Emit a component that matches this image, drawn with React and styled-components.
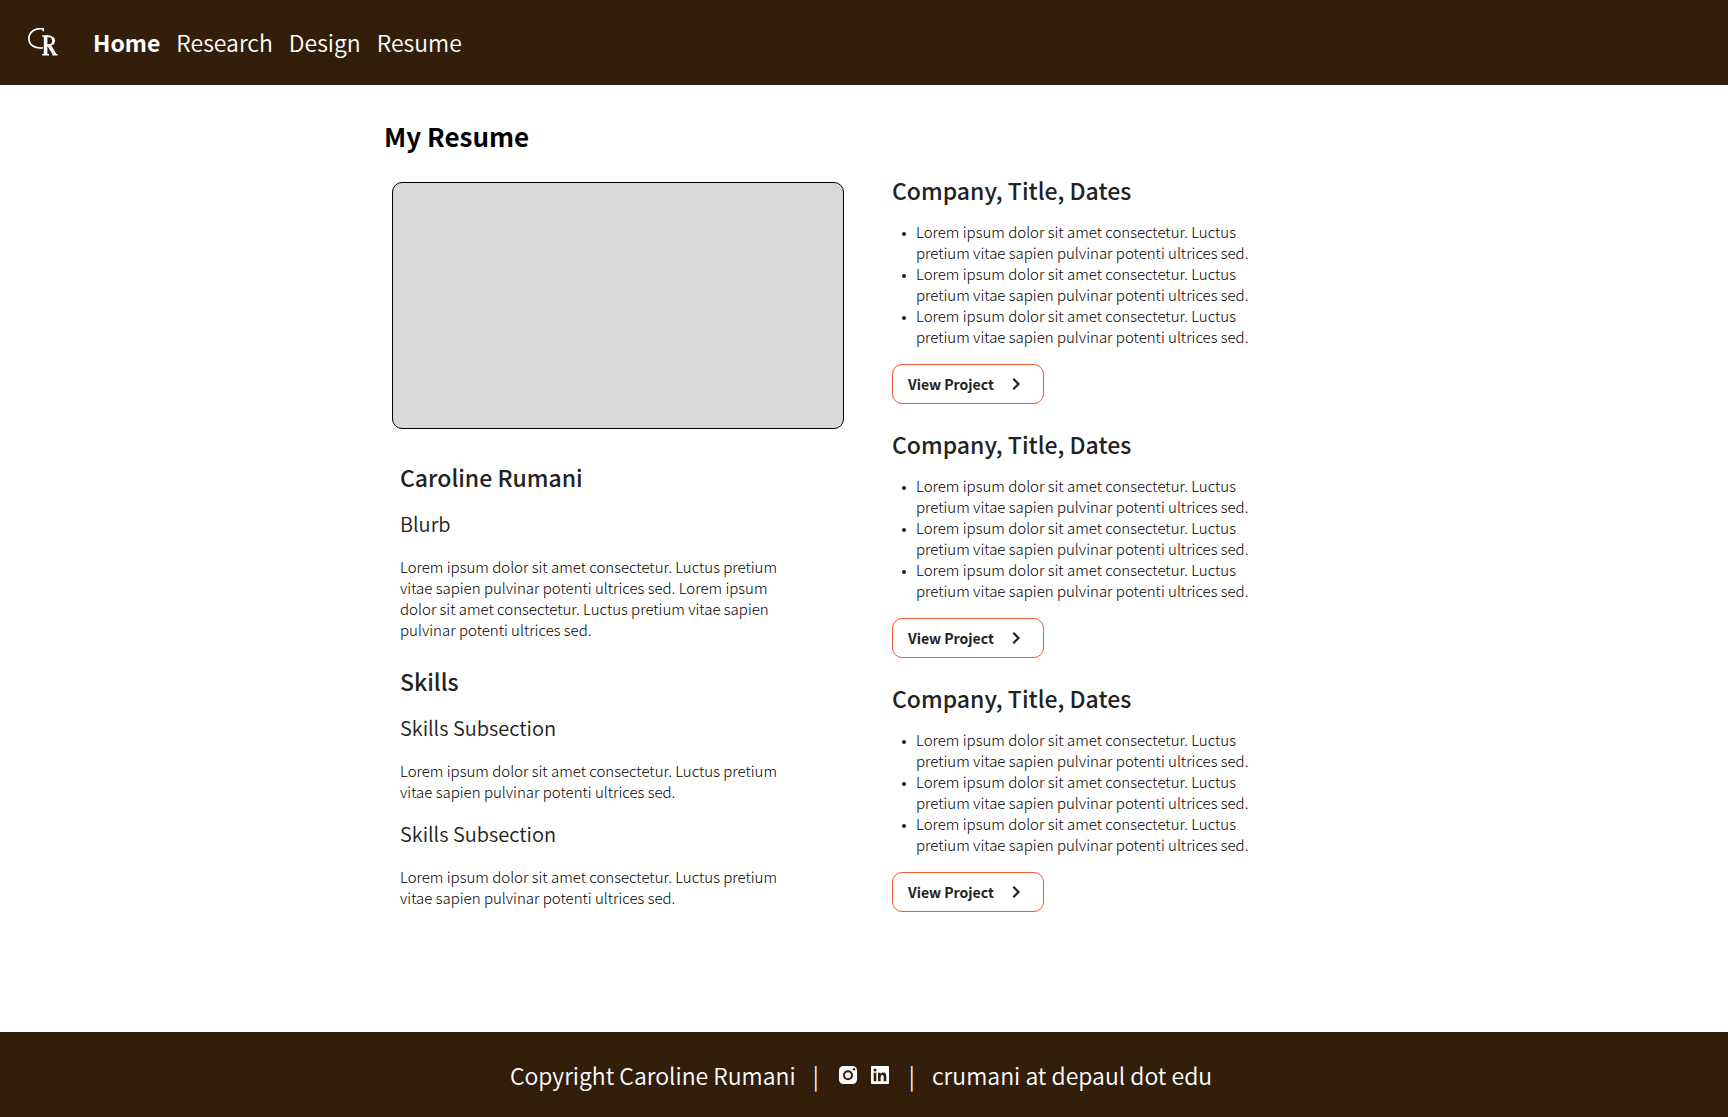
import React from "react";
import styled, { createGlobalStyle } from "styled-components";
import { BiLogoLinkedinSquare } from "react-icons/bi";

const GlobalStyle = createGlobalStyle`
  * { box-sizing: border-box; }
  body {
    margin: 0;
    background: #ffffff;
    color: #222222;
    font-family: "Noto Sans CJK SC", "Noto Sans CJK JP", "Open Sans", sans-serif;
    font-size: 15px;
    line-height: 21px;
  }
  h1, h2, h3, p, ul { margin: 0; }
`;

const Page = styled.div`
  display: flex;
  flex-direction: column;
  min-height: 100vh;
`;

const Header = styled.header`
  display: flex;
  align-items: center;
  gap: 35px;
  min-height: 85px;
  padding: 0 28px 2px;
  background: #331e0c;
  color: #ffffff;
`;

const HomeLink = styled.a`
  display: flex;
  color: inherit;
`;

const Nav = styled.nav`
  display: flex;
  flex-wrap: wrap;
  gap: 16px;
`;

const NavLink = styled.a`
  color: inherit;
  font-size: 23px;
  font-weight: ${(p) => (p.$active ? 700 : 350)};
  line-height: 34px;
  text-decoration: none;
`;

const Main = styled.main`
  width: 100%;
  max-width: 960px;
  margin: 0 auto;
  padding: 32px 0 48px;
`;

const PageTitle = styled.h1`
  color: #000000;
  font-size: 26px;
  font-weight: 700;
  line-height: 38px;
`;

const Columns = styled.div`
  display: grid;
  grid-template-columns: minmax(0, 468px) minmax(0, 1fr);
  column-gap: 40px;
  margin-top: 18px;
`;

const Profile = styled.section`
  padding: 9px 8px;
`;

const Photo = styled.div`
  height: 247px;
  border: 1px solid #000000;
  border-radius: 10px;
  background: #d9d9d9;
`;

const Details = styled.div`
  display: flex;
  flex-direction: column;
  gap: 24px;
  max-width: 400px;
  padding: 31px 8px 0;
`;

const SectionTitle = styled.h2`
  font-size: 23px;
  font-weight: 500;
  line-height: 34px;
`;

const Subsection = styled.div`
  padding-top: ${(p) => (p.$first ? 14 : 16)}px;
`;

const SubTitle = styled.h3`
  margin-bottom: 16px;
  font-size: 20px;
  font-weight: 350;
  line-height: 32px;
`;

const Text = styled.p`
  color: #000000;
  font-weight: 300;
`;

const Jobs = styled.section`
  display: flex;
  flex-direction: column;
  gap: 23px;
`;

const Job = styled.article`
  display: flex;
  flex-direction: column;
  align-items: flex-start;
`;

const Duties = styled.ul`
  max-width: 374px;
  margin: 14px 0 17px;
  padding: 0;
  list-style: none;
`;

const Duty = styled.li`
  display: flex;

  &::before {
    content: "";
    flex: none;
    width: 4px;
    height: 4px;
    margin: 11px 10px 0;
    border-radius: 50%;
    background: #222222;
  }
`;

const ProjectButton = styled.button`
  display: flex;
  align-items: center;
  gap: 10px;
  height: 40px;
  padding: 0 15px;
  border: 1px solid #f15a31;
  border-radius: 10px;
  background: #ffffff;
  color: #222222;
  font: inherit;
  font-size: 14px;
  font-weight: 700;
  cursor: pointer;
`;

const Footer = styled.footer`
  display: flex;
  flex-wrap: wrap;
  align-items: center;
  justify-content: center;
  gap: 17px;
  min-height: 85px;
  margin-top: auto;
  padding-right: 6px;
  background: #331e0c;
  color: #ffffff;
  font-size: 23px;
  font-weight: 350;
  line-height: 34px;
`;

const Socials = styled.div`
  display: flex;
  gap: 8px;
`;

const SocialLink = styled.a`
  display: flex;
  color: inherit;
`;

const Logo = () => (
  <svg width="30" height="28" viewBox="0 0 30 28" fill="none" stroke="currentColor" aria-hidden="true">
    <path d="M15.200 3.200V.9C8 -.5 .9 3.500 .9 10.600C.9 17 6.500 21 15 19.800" strokeWidth="1.700" />
    <path d="M14.200 8H20M14.200 26.800H21M24.500 26.800H29.500" strokeWidth="1.500" />
    <path d="M17.600 8V27" strokeWidth="3.600" />
    <path d="M18 8.300H20.500C26.800 8.300 26.800 17.300 20.500 17.300H18" strokeWidth="1.900" />
    <path d="M24.300 9.800C26.200 11.500 26.200 14.500 24.300 16" strokeWidth="2.600" />
    <path d="M21 17L26.700 26.700" strokeWidth="3.600" />
  </svg>
);

const Chevron = () => (
  <svg width="24" height="24" viewBox="0 0 24 24" fill="none" stroke="currentColor" strokeWidth="2.200" aria-hidden="true">
    <path d="M9.300 6.800L14.500 12L9.300 17.200" />
  </svg>
);

const Instagram = () => (
  <svg width="24" height="24" viewBox="0 0 24 24" aria-hidden="true">
    <rect x="3" y="3" width="18" height="18" rx="4.500" fill="currentColor" />
    <circle cx="12" cy="12.200" r="4" fill="none" stroke="#331e0c" strokeWidth="2" />
    <circle cx="18" cy="6.300" r="1.200" fill="#331e0c" />
  </svg>
);

const links = ["Home", "Research", "Design", "Resume"];
const duty = "Lorem ipsum dolor sit amet consectetur. Luctus pretium vitae sapien pulvinar potenti ultrices sed.";
const blurb = `${duty} ${duty}`;
const jobs = [1, 2, 3].map((id) => ({ id, title: "Company, Title, Dates", duties: [duty, duty, duty] }));

export default function App() {
  return (
    <Page>
      <GlobalStyle />
      <Header>
        <HomeLink href="#" aria-label="Caroline Rumani"><Logo /></HomeLink>
        <Nav>
          {links.map((name, i) => (
            <NavLink key={name} href="#" $active={i === 0}>{name}</NavLink>
          ))}
        </Nav>
      </Header>
      <Main>
        <PageTitle>My Resume</PageTitle>
        <Columns>
          <Profile>
            <Photo />
            <Details>
              <div>
                <SectionTitle>Caroline Rumani</SectionTitle>
                <Subsection $first>
                  <SubTitle>Blurb</SubTitle>
                  <Text>{blurb}</Text>
                </Subsection>
              </div>
              <div>
                <SectionTitle>Skills</SectionTitle>
                <Subsection $first>
                  <SubTitle>Skills Subsection</SubTitle>
                  <Text>{duty}</Text>
                </Subsection>
                <Subsection>
                  <SubTitle>Skills Subsection</SubTitle>
                  <Text>{duty}</Text>
                </Subsection>
              </div>
            </Details>
          </Profile>
          <Jobs>
            {jobs.map((job) => (
              <Job key={job.id}>
                <SectionTitle>{job.title}</SectionTitle>
                <Duties>
                  {job.duties.map((text, i) => (
                    <Duty key={i}><Text>{text}</Text></Duty>
                  ))}
                </Duties>
                <ProjectButton type="button">View Project <Chevron /></ProjectButton>
              </Job>
            ))}
          </Jobs>
        </Columns>
      </Main>
      <Footer>
        <span>Copyright Caroline Rumani</span>
        <span>|</span>
        <Socials>
          <SocialLink href="#" aria-label="Instagram"><Instagram /></SocialLink>
          <SocialLink href="#" aria-label="LinkedIn"><BiLogoLinkedinSquare size={24} /></SocialLink>
        </Socials>
        <span>|</span>
        <span>crumani at depaul dot edu</span>
      </Footer>
    </Page>
  );
}
